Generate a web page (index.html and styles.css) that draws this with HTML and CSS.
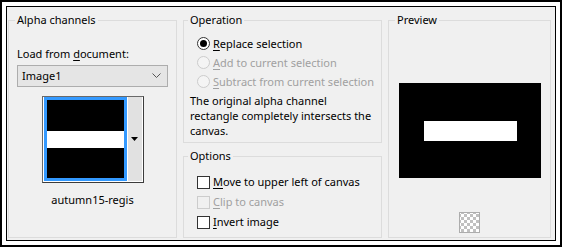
FILE: index.html
```html
<!DOCTYPE html>
<html lang="en">
  <head>
    <meta charset="UTF-8" />
    <title>Load Selection From Alpha Channel</title>
    <link rel="stylesheet" href="styles.css">
  </head>
  <body>
    <div class="frame">
      <div class="dialog">
        <fieldset class="group alpha">
          <legend>Alpha channels</legend>
          <div class="field-label">Load from <u>d</u>ocument:</div>
          <div class="combo">
            <span>Image1</span>
            <svg width="9" height="6" viewBox="0 0 9 6"><path d="M0.5 0.5 L4.5 4.5 L8.5 0.5" fill="none" stroke="#555" stroke-width="1"/></svg>
          </div>
          <div class="thumb-btn">
            <div class="thumb"><div class="thumb-bar"></div></div>
            <div class="thumb-drop">
              <svg width="7" height="4" viewBox="0 0 7 4"><path d="M0 0 H7 L3.5 4 Z" fill="#000"/></svg>
            </div>
          </div>
          <div class="thumb-name">autumn15-regis</div>
        </fieldset>

        <div class="middle">
          <fieldset class="group operation">
            <legend>Operation</legend>
            <div class="row"><span class="radio checked"></span><span><u>R</u>eplace selection</span></div>
            <div class="row disabled"><span class="radio"></span><span><u>A</u>dd to current selection</span></div>
            <div class="row disabled"><span class="radio"></span><span><u>S</u>ubtract from current selection</span></div>
            <p class="note">The original alpha channel<br>rectangle completely intersects the<br>canvas.</p>
          </fieldset>
          <fieldset class="group options">
            <legend>Options</legend>
            <div class="row opt"><span class="check"></span><span><u>M</u>ove to upper left of canvas</span></div>
            <div class="row opt disabled"><span class="check"></span><span><u>C</u>lip to canvas</span></div>
            <div class="row opt"><span class="check"></span><span><u>I</u>nvert image</span></div>
          </fieldset>
        </div>

        <fieldset class="group preview">
          <legend>Preview</legend>
          <div class="preview-box"><div class="preview-bar"></div></div>
          <div class="checker"></div>
        </fieldset>
      </div>
    </div>
  </body>
</html>
```

FILE: styles.css
```css
body {
    margin: 0;
    background-color: #fff;
    font-family: "Noto Sans", "Open Sans", sans-serif;
    font-size: 11px;
    line-height: 16px;
    color: #000;
}
.frame {
    width: 562px;
    height: 247px;
    box-sizing: border-box;
    border: 2px solid #000;
    padding: 4px;
}
.dialog {
    height: 100%;
    box-sizing: border-box;
    border: 1px solid #000;
    background-color: #f0f0f0;
    display: flex;
    gap: 6px;
    padding: 5px 2px 2px 1px;
}
.group {
    margin: 0;
    border: 1px solid #dcdcdc;
    padding: 0 8px;
    min-width: 0;
}
.group legend {
    padding: 0 2px;
    margin-left: -2px;
    line-height: 16px;
}
u {
    text-decoration: underline;
    text-underline-offset: 2px;
}

/* alpha channels */
.alpha {
    width: 169px;
    box-sizing: border-box;
}
.field-label {
    margin-top: 18px;
}
.combo {
    margin-top: 3px;
    height: 22px;
    box-sizing: border-box;
    border: 1px solid #adadad;
    background-color: #e5e5e5;
    display: flex;
    align-items: center;
    justify-content: space-between;
    padding: 0 6px 0 4px;
}
.thumb-btn {
    margin: 9px auto 0;
    width: 102px;
    height: 87px;
    box-sizing: border-box;
    border: 1px solid #3c3c3c;
    border-top-color: #696969;
    border-left-color: #696969;
    display: flex;
    background-color: #fff;
    padding: 0 1px 1px 1px;
}
.thumb {
    width: 83px;
    height: 84px;
    box-sizing: border-box;
    border: 3px solid #3399ff;
    background-color: #000;
    padding-top: 31px;
}
.thumb-bar {
    height: 17px;
    background-color: #fff;
}
.thumb-drop {
    flex: 1;
    background-color: #e1e1e1;
    border-left: 1px solid #fff;
    display: flex;
    align-items: center;
    justify-content: center;
}
.thumb-name {
    text-align: center;
    margin-top: 9px;
}

/* middle column */
.middle {
    width: 199px;
    display: flex;
    flex-direction: column;
    gap: 5px;
}
.operation {
    height: 131px;
    box-sizing: border-box;
    padding: 0 6px;
}
.options {
    flex: 1;
    padding: 0 6px;
}
.row {
    display: flex;
    align-items: center;
    gap: 3px;
    height: 19px;
    padding-left: 7px;
    white-space: nowrap;
}
.operation .row:first-of-type {
    margin-top: 6px;
}
.row.disabled {
    color: #a0a0a0;
}
.radio {
    width: 13px;
    height: 13px;
    box-sizing: border-box;
    border-radius: 50%;
    border: 1px solid #333;
    background-color: #fff;
    display: flex;
    align-items: center;
    justify-content: center;
}
.radio.checked::after {
    content: "";
    width: 7px;
    height: 7px;
    border-radius: 50%;
    background-color: #000;
}
.disabled .radio {
    border-color: #cccccc;
    background-color: #f4f4f4;
}
.note {
    margin: 2px 0 0;
    line-height: 15px;
    white-space: nowrap;
}
.row.opt {
    height: 20px;
}
.options .row:first-of-type {
    margin-top: 8px;
}
.check {
    width: 13px;
    height: 13px;
    box-sizing: border-box;
    border: 1px solid #333;
    background-color: #fff;
}
.disabled .check {
    border-color: #cccccc;
    background-color: #f0f0f0;
}

/* preview */
.preview {
    flex: 1;
    padding: 0 8px;
    margin-right: 2px;
}
.preview-box {
    margin: 55px auto 0;
    width: 142px;
    height: 95px;
    background-color: #000;
    padding-top: 38px;
    box-sizing: border-box;
}
.preview-bar {
    margin-left: 25px;
    width: 93px;
    height: 20px;
    background-color: #fff;
}
.checker {
    margin: 34px auto 0;
    width: 21px;
    height: 21px;
    box-sizing: border-box;
    border: 1px solid #adadad;
    background-color: #fff;
    background-image:
        linear-gradient(45deg, #c0c0c0 25%, transparent 25%, transparent 75%, #c0c0c0 75%),
        linear-gradient(45deg, #c0c0c0 25%, transparent 25%, transparent 75%, #c0c0c0 75%);
    background-size: 6px 6px;
    background-position: 1px 1px, 4px 4px;
}
```
